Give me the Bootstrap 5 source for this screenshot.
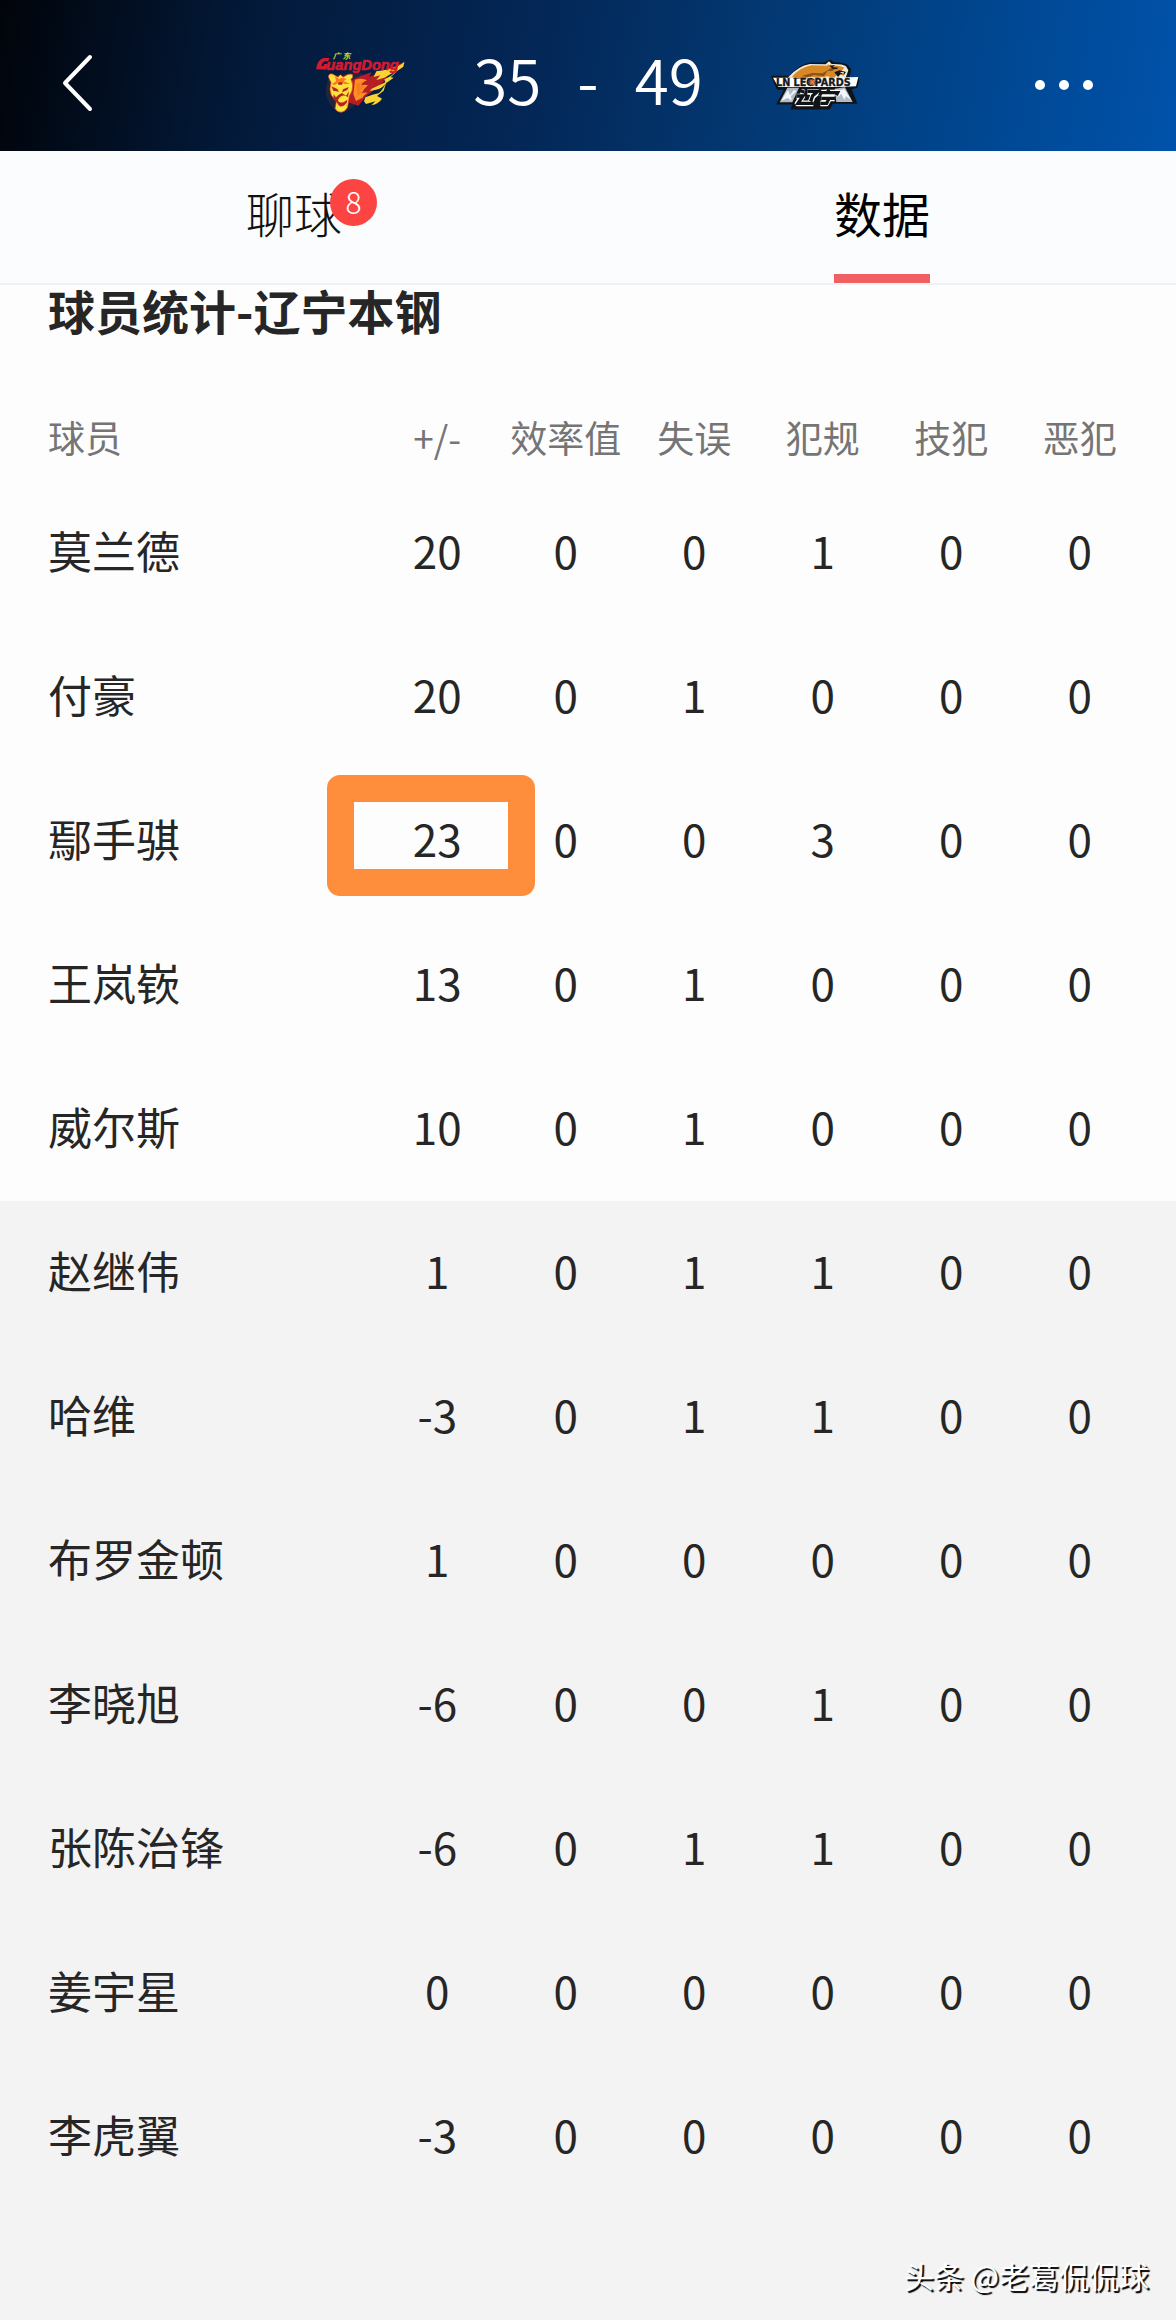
<!DOCTYPE html>
<html lang="zh-CN">
<head>
<meta charset="utf-8">
<meta name="viewport" content="width=device-width, initial-scale=1">
<title>球员统计</title>
<link href="https://cdn.jsdelivr.net/npm/bootstrap@5.3.0/dist/css/bootstrap.min.css" rel="stylesheet">
<style>
  body { font-family: "Noto Sans CJK SC", "Noto Sans", sans-serif; color: #262626; background: #f3f3f3; }
  .match-bar { display: grid; grid-template-columns: 1fr auto 1fr; height: 151px; padding: 16px 58px 0 56px;
    background: linear-gradient(100deg, #01040a 0%, #031a3b 22%, #032655 44%, #033872 64%, #00468f 82%, #0052ab 100%); }
  .match-bar .btn { color: #fff; line-height: 1; }
  .score { margin: 0 66px; padding-bottom: 12px; font-size: 62px; line-height: 72px; font-weight: 350; color: #fff; }
  .score-dash { padding: 0 36px; }
  .tab-bar { height: 134px; background: #fbfcfd; border-bottom: 2px solid #eff2f3; }
  .tab-bar .nav-link { padding: 25px 0 0; font-size: 48px; line-height: 72px; font-weight: 300; color: #111; }
  .tab-bar .nav-link.active { font-weight: 400; color: #000; }
  .tab-label { display: inline-block; position: relative; height: 107px; }
  .active .tab-label { border-bottom: 9px solid #f06062; }
  .count-badge { position: absolute; left: 84px; top: 3px; width: 47px; height: 47px; border-radius: 50%;
    background: #fc4442; color: #fff; font-size: 30px; line-height: 44px; font-weight: 300; text-align: center; }
  .stats-title { font-size: 47px; line-height: 50px; font-weight: 700; color: #262626; margin: 0; padding: 0 48px 6px; background: #fdfdfd; }
  .stats-grid { width: 100%; table-layout: fixed; margin: 0; }
  .stats-grid th, .stats-grid td { padding: 0 0 6px; text-align: center; vertical-align: middle; font-weight: 400; white-space: nowrap; }
  .stats-grid thead th { height: 140px; padding-top: 52px; padding-bottom: 0; font-size: 37px; line-height: 48px; color: #757575; }
  .stats-grid tbody tr { height: 144px; font-size: 44px; line-height: 64px; }
  .stats-grid tr > :first-child { width: 373px; padding-left: 48px; text-align: left; }
  .edge { width: 32px; }
  .starters { background: #fdfdfd; }
  .ring { position: absolute; left: -46px; top: 6px; width: 208px; height: 121px; border: 27px solid #ff8e3c; border-radius: 13px; pointer-events: none; }
  .author { padding: 44px 27px 18px; font-size: 30px; line-height: 44px; color: #fff; text-shadow: 2px 2px 1px #000; }
</style>
</head>
<body>
<header class="match-bar align-items-center">
  <button class="btn p-0 border-0 text-start" type="button" aria-label="返回">
    <svg width="44" height="60" viewBox="0 0 44 60" fill="none" stroke="currentColor" stroke-width="4" stroke-linecap="round" stroke-linejoin="round"><path d="M34 3 9 29 34 55"/></svg>
  </button>
  <div class="d-flex align-items-center">
    <svg width="92" height="76" viewBox="48 18 276 228" role="img" aria-label="广东">
      <path fill="#23263a" d="M92 110q-18 35-8 65 15 36 42 43 32-5 50-36l60-60-60-26z"/>
      <path fill="#b51d27" stroke="#b51d27" stroke-width="4" d="M160 122q25-14 54-22l-8 14 60-24 50-22-30 26-16 8-24 24 6-1-22 19-30 23-22 28-36-12z"/>
      <path fill="#fbd332" d="M316 66q-18 14-26 15-24 8-58 13l-8 17 20-5-12 14 24-7q22-14 33-18-8 10-18 15l-15 8 3 9-30 14q-13 4-17 12l19-4q16-2 28-17-10 21-20 28-17 3-40 12l-4 12 6 8 28-8-12 12q22-4 32-20-15-9-15-8l20-16 7-22 23-17-9-1q17-20 38-32z"/>
      <path fill="#f98f25" d="M168 119q22-6 36 2-14 5-17 15 12-4 20 0-15 12-19 24 10-4 18-2-13 8-15 15l-20 10-8-20z"/>
      <path fill="#fde13c" stroke="#d92a22" stroke-width="2" d="M88 111q1-12 13-9l16 9 7-7 9 7q18-13 28-7 3 8-5 14 9 16 3 35l-8 16-5 33q-8 15-20 15-13 0-18-12l4-20-15-19q-8-18-1-38z"/>
      <path fill="#b52420" d="m97 139 18 8 5 8-17-3zM149 141l-17 7-3 9 16-7zM115 119l8 7 13-7-7 15h-11zM104 163l7 9 7-7 11-6 12 8 9-13-3 18q-8-8-17-5-10 3-13 14 2 10 18 5l10-7-3 20q-9 10-21 4-8 3-6-14l-12-11z"/>
      <path fill="#ffe642" d="m113 188 2 16q13 14 26-1l4-16-9 9q-11 7-17 0z"/>
      <path fill="#fc7c1d" d="m108 107 12 10 9-4 14 3-9 8 19 7-15 2-13-8-18 10-9-2 13-9zM172 132l18-7-9 15 18-3-19 17 14-1-18 15z"/>
      <path fill="#d21a30" d="M51 88q4-28 22-34h18l-3 10H76q-7 3-9 14h7l2-6h11l-5 17z"/>
      <text x="82" y="89" font-family="Liberation Sans, sans-serif" font-size="44" font-style="italic" font-weight="700" fill="#d21a30" stroke="#d21a30" stroke-width="2">uangDong</text>
      <text x="101" y="57" font-family="Noto Sans CJK SC, sans-serif" font-size="24" font-style="italic" font-weight="700" fill="#c6dc35">广 东</text>
    </svg>
    <div class="score d-flex"><span>35</span><span class="score-dash">-</span><span>49</span></div>
    <svg width="90" height="52" viewBox="36 45 270 156" role="img" aria-label="辽宁">
      <path fill="#101419" stroke="#101419" stroke-width="5" stroke-linejoin="round" d="M45 101h53q30-36 64-40l43-1 14-8 10 8q27-1 42 8l9 12-6 27 32-2-7 27-18 6 17 42h-72l-9 17H104l6-15H61l24-44H62z"/>
      <path fill="#eee9dd" d="M92 104q31-35 67-41l47 1 10-9 8 8q31-1 43 7l7 12-7 20-18 9z"/>
      <path fill="#d88925" d="M104 103q25-31 60-36l45 1 9-7 6 7q24-2 38 6l-8 10 10 2-3 12-18-6-14 16-16-8-30 4-25-3-21 7z"/>
      <path fill="#8c5219" d="m134 99 32-9 30 1 17-9-12 18-30-4-18 7zM222 75l17 1-14 8-14-1z"/>
      <path fill="#171717" d="m218 68 16-2-7 6 17 2-4 4-14-1zM232 88l15-6 20 5-5 7-11-1-8 9z"/>
      <path fill="#fff" d="m248 87 13 1-2 5zM221 64l-6-5v8z"/>
      <path fill="#b1bcc6" d="M68 178 91 134h35l-20 44zM233 137l31-4 23 44h-49z"/>
      <path fill="#f4f7f9" d="m73 173 20-33 6 17 11-15 9 2-17 15 2 14-12-8zM242 143l20-5 20 33-15-11-5 10-9-17-13 8z"/>
      <path fill="#fff" d="M48 104h64l-5 3h73l14-2 110-3-7 28-48 2H64z"/>
      <text x="57" y="128" font-family="DejaVu Sans, sans-serif" font-size="29" font-weight="700" fill="#16191d" stroke="#16191d">LN LEOPARDS</text>
      <circle cx="166" cy="118" r="10" fill="#b15b30" stroke="#30180e" stroke-width="2"/><path fill="none" stroke="#f1bc8d" stroke-width="2" d="M160 111q9 5 12 15M174 111q-8 4-14 13"/>
      <path fill="none" stroke="#fff" stroke-width="17" stroke-linejoin="round" d="M132 145l10 4M119 161h17l-14 20h47M151 147h31l-15 13-6 17M212 148l2-7M188 158l4-9h50l-4 8M194 166h39M216 166l-8 15h-18"/>
      <path fill="none" stroke="#111417" stroke-width="10" d="M132 143l10 5M119 159h19l-15 22h47M151 145h31l-15 13-6 17M212 148l3-8M188 158l4-9h50l-4 8M194 166h40M216 166l-7 15h-19"/>
    </svg>
  </div>
  <button class="btn p-0 border-0 text-end me-4" type="button" aria-label="更多">
    <svg width="64" height="16" viewBox="0 0 64 16" fill="currentColor"><circle cx="10" cy="8" r="5"/><circle cx="34" cy="8" r="5"/><circle cx="58" cy="8" r="5"/></svg>
  </button>
</header>

<nav class="tab-bar nav nav-fill" aria-label="比赛">
  <a class="nav-link nav-item col-6" href="#chat"><span class="tab-label">聊球<span class="count-badge">8</span></span></a>
  <a class="nav-link nav-item col-6 active" href="#data" aria-current="page"><span class="tab-label">数据</span></a>
</nav>

<main id="data">
  <h1 class="stats-title">球员统计-辽宁本钢</h1>
  <table class="stats-grid">
    <thead class="starters"><tr><th scope="col">球员</th><th scope="col">+/-</th><th scope="col">效率值</th><th scope="col">失误</th><th scope="col">犯规</th><th scope="col">技犯</th><th scope="col">恶犯</th><td class="edge"></td></tr></thead>
    <tbody class="starters">
      <tr><th scope="row">莫兰德</th><td>20</td><td>0</td><td>0</td><td>1</td><td>0</td><td>0</td><td></td></tr>
      <tr><th scope="row">付豪</th><td>20</td><td>0</td><td>1</td><td>0</td><td>0</td><td>0</td><td></td></tr>
      <tr><th scope="row">鄢手骐</th><td class="position-relative">23<span class="ring"></span></td><td>0</td><td>0</td><td>3</td><td>0</td><td>0</td><td></td></tr>
      <tr><th scope="row">王岚嵚</th><td>13</td><td>0</td><td>1</td><td>0</td><td>0</td><td>0</td><td></td></tr>
      <tr><th scope="row">威尔斯</th><td>10</td><td>0</td><td>1</td><td>0</td><td>0</td><td>0</td><td></td></tr>
    </tbody>
    <tbody>
      <tr><th scope="row">赵继伟</th><td>1</td><td>0</td><td>1</td><td>1</td><td>0</td><td>0</td><td></td></tr>
      <tr><th scope="row">哈维</th><td>-3</td><td>0</td><td>1</td><td>1</td><td>0</td><td>0</td><td></td></tr>
      <tr><th scope="row">布罗金顿</th><td>1</td><td>0</td><td>0</td><td>0</td><td>0</td><td>0</td><td></td></tr>
      <tr><th scope="row">李晓旭</th><td>-6</td><td>0</td><td>0</td><td>1</td><td>0</td><td>0</td><td></td></tr>
      <tr><th scope="row">张陈治锋</th><td>-6</td><td>0</td><td>1</td><td>1</td><td>0</td><td>0</td><td></td></tr>
      <tr><th scope="row">姜宇星</th><td>0</td><td>0</td><td>0</td><td>0</td><td>0</td><td>0</td><td></td></tr>
      <tr><th scope="row">李虎翼</th><td>-3</td><td>0</td><td>0</td><td>0</td><td>0</td><td>0</td><td></td></tr>
    </tbody>
  </table>
</main>
<footer class="author text-end">头条 @老葛侃侃球</footer>
<script src="https://cdn.jsdelivr.net/npm/bootstrap@5.3.0/dist/js/bootstrap.bundle.min.js"></script>
</body>
</html>
